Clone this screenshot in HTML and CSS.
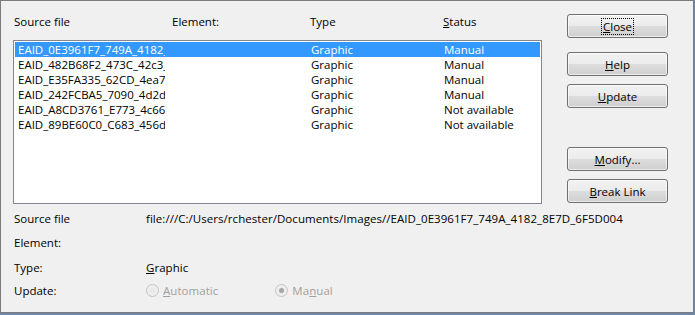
FILE: index.html
```html
<!DOCTYPE html>
<html>
<head>
<meta charset="utf-8">
<link rel="stylesheet" href="styles.css">
</head>
<body>
<div class="frame">
  <div class="dialog">
    <div class="top">
      <div class="left">
        <div class="head">
          <span>Source file</span>
          <span>Element:</span>
          <span>Type</span>
          <span><u>S</u>tatus</span>
        </div>
        <div class="list">
          <div class="row sel"><span class="c1">EAID_0E3961F7_749A_4182_8E7D_6F5D004</span><span></span><span>Graphic</span><span>Manual</span></div>
          <div class="row"><span class="c1">EAID_482B68F2_473C_42c3_9A1B_77C0</span><span></span><span>Graphic</span><span>Manual</span></div>
          <div class="row"><span class="c1">EAID_E35FA335_62CD_4ea7_A3F1_0B2C</span><span></span><span>Graphic</span><span>Manual</span></div>
          <div class="row"><span class="c1">EAID_242FCBA5_7090_4d2d_B6E2_11F0</span><span></span><span>Graphic</span><span>Manual</span></div>
          <div class="row"><span class="c1">EAID_A8CD3761_E773_4c66_8D0C_5A47</span><span></span><span>Graphic</span><span>Not available</span></div>
          <div class="row"><span class="c1">EAID_89BE60C0_C683_456d_9E2A_3C81</span><span></span><span>Graphic</span><span>Not available</span></div>
        </div>
      </div>
      <div class="buttons">
        <button class="btn focus"><span class="lbl"><u>C</u>lose</span></button>
        <button class="btn g14"><span class="lbl"><u>H</u>elp</span></button>
        <button class="btn g8"><span class="lbl"><u>U</u>pdate</span></button>
        <button class="btn g39"><span class="lbl"><u>M</u>odify...</span></button>
        <button class="btn g8"><span class="lbl"><u>B</u>reak Link</span></button>
      </div>
    </div>
    <div class="details">
      <span class="lab">Source file</span>
      <span class="val">file:///C:/Users/rchester/Documents/Images//EAID_0E3961F7_749A_4182_8E7D_6F5D004</span>
      <span class="lab">Element:</span>
      <span class="val"></span>
      <span class="lab">Type:</span>
      <span class="val"><u>G</u>raphic</span>
      <span class="lab">Update:</span>
      <span class="val radios">
        <span class="radio"><span class="circ"></span><span class="dis"><u>A</u>utomatic</span></span>
        <span class="radio"><span class="circ on"></span><span class="dis">Ma<u>n</u>ual</span></span>
      </span>
    </div>
  </div>
</div>
</body>
</html>
```

FILE: styles.css
```css
html, body {
  margin: 0;
  padding: 0;
  background: #f0f0f0;
}
body {
  font-family: "Open Sans", "Noto Sans", sans-serif;
  font-size: 11.5px;
  color: #000;
}
.frame {
  width: 695px;
  height: 315px;
  background: #6f88aa;
  overflow: hidden;
}
.dialog {
  box-sizing: border-box;
  width: 694px;
  height: 313px;
  border: 1px solid #7b7b7b;
  background: #f0f0f0;
}
.top {
  display: flex;
}
.left {
  margin-left: 12px;
  width: 529px;
}
.head {
  display: grid;
  grid-template-columns: 158px 138px 133px 1fr;
  height: 15px;
  line-height: 15px;
  margin-top: 13px;
  padding-left: 1px;
  white-space: nowrap;
}
.list {
  box-sizing: border-box;
  margin-top: 11px;
  height: 164px;
  border: 1px solid #828790;
  background: #fff;
  padding: 1px;
}
.row {
  display: grid;
  grid-template-columns: 150px 146px 133px 1fr;
  grid-template-rows: 15px;
  height: 15px;
  line-height: 16px;
  white-space: nowrap;
}
.row .c1 {
  padding-left: 3px;
  overflow: hidden;
}
.row.sel {
  background: #3399ff;
  color: #fff;
}
.buttons {
  display: flex;
  flex-direction: column;
  margin-left: 25px;
  padding-top: 13px;
}
.btn {
  box-sizing: border-box;
  width: 101px;
  height: 24px;
  border: 1px solid #707070;
  border-radius: 3px;
  background: linear-gradient(#f2f2f2 0%, #ebebeb 48%, #dddddd 52%, #cfcfcf 100%);
  font-family: inherit;
  font-size: inherit;
  color: #000;
  padding: 0;
  display: flex;
  align-items: center;
  justify-content: center;
  box-shadow: inset 0 0 0 1px rgba(255,255,255,0.6);
}
.btn.focus .lbl {
  outline: 1px dotted #000;
  outline-offset: 0;
  padding: 0 1px;
}
.g14 { margin-top: 14px; }
.g8 { margin-top: 8px; }
.g39 { margin-top: 39px; }
.details {
  display: grid;
  grid-template-columns: 132px 1fr;
  grid-template-rows: 24px 25px 23px 20px;
  margin-top: 7px;
  padding-left: 13px;
  line-height: 15px;
  white-space: nowrap;
}
.val {
  letter-spacing: 0.05px;
}
.radios {
  display: flex;
}
.radio {
  display: flex;
  align-items: center;
  height: 15px;
}
.radio + .radio {
  margin-left: 57px;
}
.circ {
  box-sizing: border-box;
  width: 13px;
  height: 13px;
  border-radius: 50%;
  border: 1px solid #c4c4c4;
  background: radial-gradient(circle, #e6e6e6 0%, #f4f4f4 100%);
  margin-right: 4px;
  position: relative;
}
.circ.on::after {
  content: "";
  position: absolute;
  left: 3px;
  top: 3px;
  width: 5px;
  height: 5px;
  border-radius: 50%;
  background: #a6a6a6;
}
.dis {
  color: #a0a0a0;
}
```
